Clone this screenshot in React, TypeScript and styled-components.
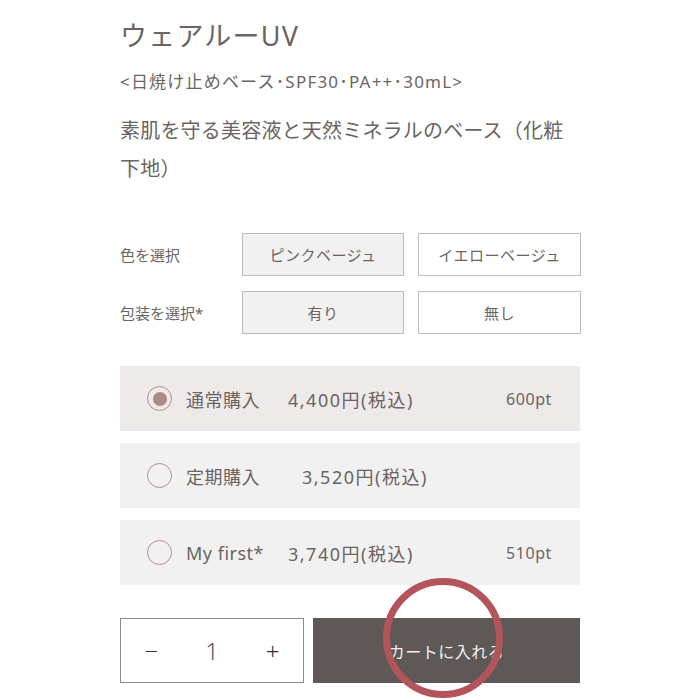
import React from "react";
import styled, { createGlobalStyle } from "styled-components";

const Global = createGlobalStyle`
  html, body { margin: 0; padding: 0; background: #fff; }
  body { font-family: "Noto Sans", "Noto Sans CJK JP", sans-serif; color: #6a6462; }
`;

const Page = styled.div`
  position: relative;
  width: 700px;
  height: 700px;
  overflow: hidden;
  padding: 0 120px;
  box-sizing: border-box;
`;

const Title = styled.h1`
  margin: 0;
  padding-top: 17px;
  font-size: 27px;
  font-weight: 400;
  line-height: 38px;
  color: #6a6462;
  letter-spacing: 1.2px;
`;

const Sub = styled.p`
  margin: 15px 0 0;
  font-size: 17px;
  line-height: 24px;
  color: #6a6462;
  letter-spacing: 1.2px;
`;

const Desc = styled.p`
  margin: 18px 0 0;
  font-size: 20px;
  line-height: 38px;
  color: #6a6462;
  letter-spacing: 0.2px;
`;

const Options = styled.div`
  margin-top: 45px;
  display: flex;
  flex-direction: column;
  gap: 15px;
`;

const OptRow = styled.div`
  display: grid;
  grid-template-columns: 108px 162px 163px;
  column-gap: 14px;
  align-items: center;
`;

const OptLabel = styled.span`
  font-size: 15px;
  color: #6a6462;
`;

const OptBtn = styled.div<{ $active?: boolean }>`
  height: 43px;
  box-sizing: border-box;
  border: 1.5px solid #bdbcbc;
  background: ${(p) => (p.$active ? "#f2f1f1" : "#fff")};
  display: flex;
  align-items: center;
  justify-content: center;
  font-size: 15px;
  color: #6a6462;
  letter-spacing: 0.5px;
`;

const Plans = styled.div`
  margin-top: 32px;
  display: flex;
  flex-direction: column;
  gap: 12px;
`;

const Plan = styled.div<{ $active?: boolean }>`
  height: 65px;
  background: ${(p) => (p.$active ? "#efeaea" : "#f2f1f1")};
  display: flex;
  align-items: center;
  padding: 0 28px 0 27px;
  box-sizing: border-box;
`;

const Radio = styled.span<{ $checked?: boolean }>`
  width: 25px;
  height: 25px;
  box-sizing: border-box;
  border-radius: 50%;
  border: 1.5px solid #b58e8c;
  display: flex;
  align-items: center;
  justify-content: center;
  flex-shrink: 0;
  &::after {
    content: "";
    width: 14px;
    height: 14px;
    border-radius: 50%;
    background: ${(p) => (p.$checked ? "#ad8a88" : "transparent")};
  }
`;

const PlanName = styled.span<{ $w?: number }>`
  margin-left: 14px;
  width: ${(p) => p.$w ?? 102}px;
  font-size: 18px;
  color: #6a6462;
  white-space: nowrap;
  letter-spacing: 0.5px;
`;

const Price = styled.span`
  font-size: 18px;
  color: #6a6462;
  flex: 1;
  white-space: nowrap;
  letter-spacing: 1.5px;
`;

const Points = styled.span`
  font-size: 16px;
  color: #6a6462;
  letter-spacing: 0.6px;
`;

const Bottom = styled.div`
  margin-top: 33px;
  display: flex;
  gap: 9px;
  height: 65px;
`;

const Qty = styled.div`
  width: 184px;
  box-sizing: border-box;
  border: 1.5px solid #8c8888;
  display: grid;
  grid-template-columns: 1fr 1fr 1fr;
  align-items: center;
  justify-items: center;
  font-size: 24px;
  font-weight: 300;
  color: #333;
`;

const QtyNum = styled.span`
  font-size: 24px;
  font-weight: 300;
  color: #555;
`;

const Cart = styled.div`
  flex: 1;
  background: #5e5956;
  display: flex;
  align-items: center;
  justify-content: center;
  font-size: 16px;
  color: #f2f0ef;
  letter-spacing: 0.5px;
`;

const Ring = styled.div`
  position: absolute;
  left: 383px;
  top: 578px;
  width: 120px;
  height: 120px;
  box-sizing: border-box;
  border-radius: 50%;
  border: 7px solid #b3545a;
  pointer-events: none;
`;

export default function App() {
  return (
    <>
      <Global />
      <Page>
        <Title>ウェアルーUV</Title>
        <Sub>&lt;日焼け止めベース･SPF30･PA++･30mL&gt;</Sub>
        <Desc>素肌を守る美容液と天然ミネラルのベース（化粧下地）</Desc>
        <Options>
          <OptRow>
            <OptLabel>色を選択</OptLabel>
            <OptBtn $active>ピンクベージュ</OptBtn>
            <OptBtn>イエローベージュ</OptBtn>
          </OptRow>
          <OptRow>
            <OptLabel>包装を選択*</OptLabel>
            <OptBtn $active>有り</OptBtn>
            <OptBtn>無し</OptBtn>
          </OptRow>
        </Options>
        <Plans>
          <Plan $active>
            <Radio $checked />
            <PlanName>通常購入</PlanName>
            <Price>4,400円(税込)</Price>
            <Points>600pt</Points>
          </Plan>
          <Plan>
            <Radio />
            <PlanName $w={116}>定期購入</PlanName>
            <Price>3,520円(税込)</Price>
          </Plan>
          <Plan>
            <Radio />
            <PlanName>My first*</PlanName>
            <Price>3,740円(税込)</Price>
            <Points>510pt</Points>
          </Plan>
        </Plans>
        <Bottom>
          <Qty>
            <span>−</span>
            <QtyNum>1</QtyNum>
            <span>+</span>
          </Qty>
          <Cart>カートに入れる</Cart>
        </Bottom>
        <Ring />
      </Page>
    </>
  );
}
